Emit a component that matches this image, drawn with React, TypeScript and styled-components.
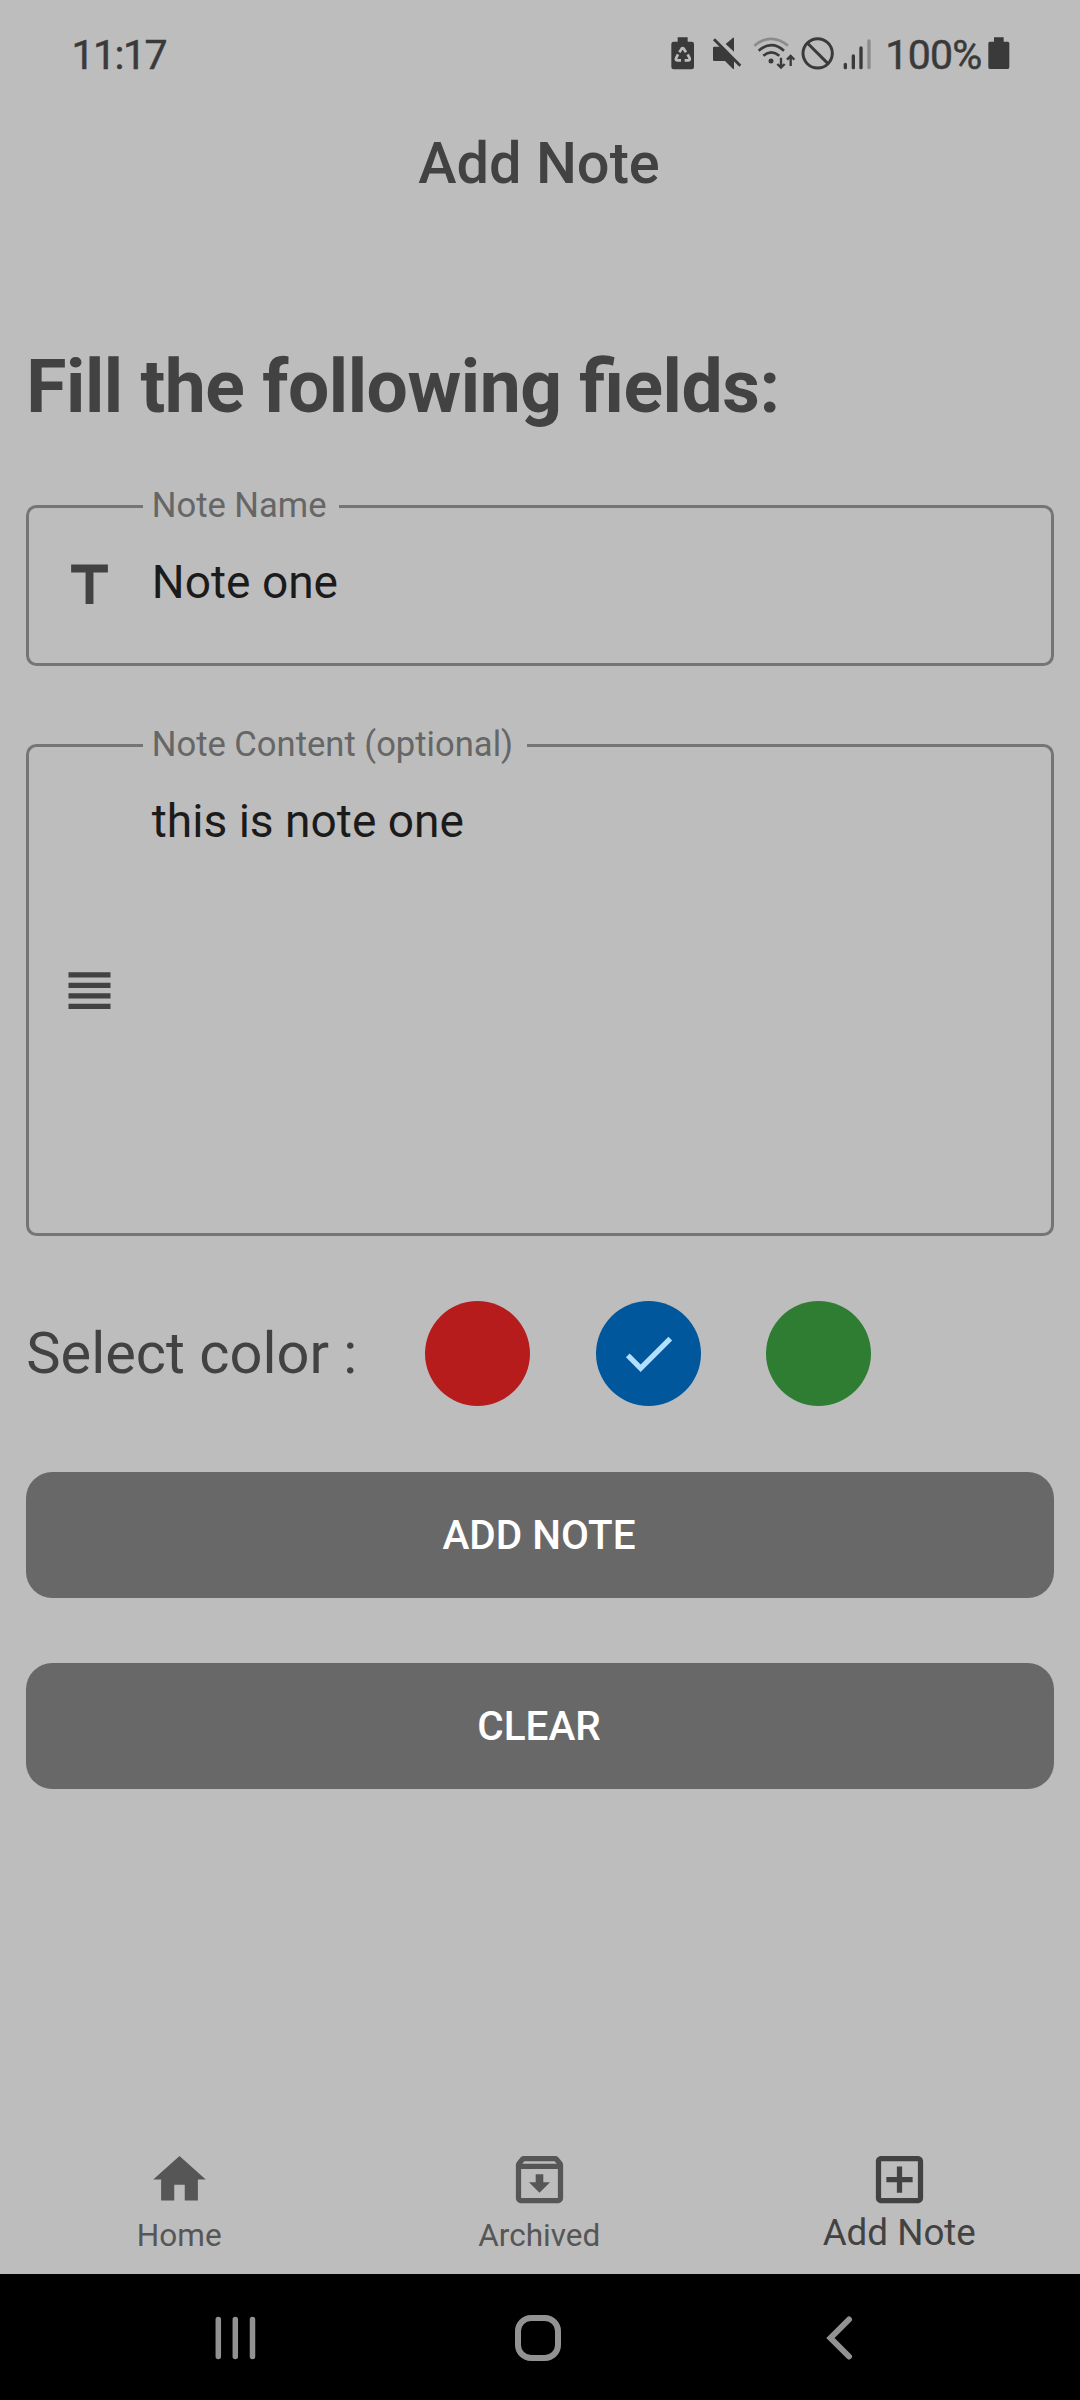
import React from "react";
import styled, { createGlobalStyle } from "styled-components";

const BG = "#bdbdbd";
const INK = "#424242";
const STATUS = "#3a3a3a";

const GlobalStyle = createGlobalStyle`
  * { box-sizing: border-box; }
  body { margin: 0; background: ${BG}; }
  svg { display: block; flex: none; }
`;

const Screen = styled.div`
  width: 1080px;
  height: 2400px;
  display: flex;
  flex-direction: column;
  background: ${BG};
  color: ${INK};
  font-family: Roboto, "Noto Sans", sans-serif;
  overflow: hidden;
`;

const StatusBar = styled.header`
  display: flex;
  justify-content: space-between;
  height: 84px;
  padding: 31px 70.3px 0 71.5px;
  color: ${STATUS};
`;

const StatusText = styled.span<{ $spacing: number; $width?: number }>`
  width: ${(p) => (p.$width ? `${p.$width}px` : "auto")};
  font-size: 41px;
  line-height: 48px;
  font-weight: 400;
  -webkit-text-stroke: 0.5px ${STATUS};
  letter-spacing: ${(p) => p.$spacing}px;
  white-space: nowrap;
`;

const StatusIcons = styled.div`
  display: flex;
  align-items: flex-start;
`;

const Glyph = styled.svg<{ $gap?: number }>`
  margin-top: 4px;
  margin-right: ${(p) => p.$gap ?? 0}px;
`;

const TitleBar = styled.div`
  display: flex;
  align-items: center;
  justify-content: center;
  height: 158px;
  padding-right: 2px;
  font-size: 57.75px;
  font-weight: 500;
  line-height: 68px;
`;

const Form = styled.main`
  flex: 1;
  display: flex;
  flex-direction: column;
  padding: 102px 26.25px 0;
`;

const Heading = styled.h1`
  margin: 0;
  font-size: 73.2px;
  line-height: 86px;
  font-weight: 700;
  letter-spacing: -0.45px;
  font-feature-settings: "liga" 1;
`;

const Field = styled.div<{ $height: number; $top: number }>`
  position: relative;
  display: flex;
  height: ${(p) => p.$height}px;
  margin-top: ${(p) => p.$top}px;
  padding-left: 28.5px;
  border: 3px solid #757575;
  border-radius: 10.5px;
`;

const FieldIcon = styled.div`
  align-self: center;
`;

const FieldLabel = styled.label<{ $width: number }>`
  position: absolute;
  left: 114px;
  top: -23px;
  width: ${(p) => p.$width}px;
  padding-left: 8.5px;
  background: ${BG};
  color: #666;
  font-size: 34.6px;
  line-height: 40px;
  white-space: nowrap;
`;

const FieldValue = styled.span`
  margin: 47px 0 0 31px;
  color: #1b1b1b;
  font-size: 46.1px;
  line-height: 54px;
`;

const ColorRow = styled.div`
  display: flex;
  align-items: center;
  height: 105px;
  margin-top: 65px;
`;

const ColorLabel = styled.span`
  width: 399px;
  padding-bottom: 2px;
  font-size: 57.75px;
  line-height: 68px;
`;

const Swatch = styled.button<{ $color: string }>`
  display: flex;
  align-items: center;
  justify-content: center;
  width: 105px;
  height: 105px;
  margin: 0 65.6px 0 0;
  padding: 0;
  border: 0;
  border-radius: 50%;
  background: ${(p) => p.$color};
`;

const ActionButton = styled.button`
  height: 126.2px;
  margin-top: 65.5px;
  padding: 0 2px 0 0;
  border: 0;
  border-radius: 26.25px;
  background: #686868;
  color: #fff;
  font-family: inherit;
  font-size: 40.5px;
  font-weight: 500;
  line-height: 48px;
`;

const TabBar = styled.nav`
  display: grid;
  grid-template-columns: repeat(3, 1fr);
  height: 146px;
  padding-top: 20px;
`;

const Tab = styled.div<{ $active?: boolean }>`
  display: flex;
  flex-direction: column;
  align-items: center;
  padding-right: 1.5px;
  color: ${(p) => (p.$active ? INK : "#565656")};
  font-size: ${(p) => (p.$active ? 36.75 : 31.5)}px;
  line-height: ${(p) => (p.$active ? 43 : 49)}px;
`;

const NavBar = styled.footer`
  display: flex;
  align-items: center;
  justify-content: space-between;
  height: 126px;
  padding: 2px 227px 0 214px;
  background: #000;
`;

const HomeKey = styled.svg`
  margin-right: 7px;
`;

const Icon = ({ d, color = "currentColor" }: { d: string; color?: string }) => (
  <svg width="63" height="63" viewBox="0 0 24 24" fill={color}>
    <path d={d} />
  </svg>
);

const PATHS = {
  text: "M5 4v3h5.5v12h3V7H19V4z",
  lines: "M4 15h16v-2H4v2zm0 4h16v-2H4v2zm0-8h16V9H4v2zm0-6v2h16V5H4z",
  check: "M9 16.17L4.83 12l-1.42 1.41L9 19 21 7l-1.41-1.41z",
  home: "M10 20v-6h4v6h5v-8h3L12 3 2 12h3v8z",
  archive:
    "M16 13h-2.55v-3h-2.9v3H8l4 4zM20.54 5.23l-1.39-1.68C18.88 3.21 18.47 3 18 3H6c-.47 0-.88.21-1.16.55L3.46 5.23C3.17 5.57 3 6.02 3 6.5V19c0 1.1.9 2 2 2h14c1.1 0 2-.9 2-2V6.5c0-.48-.17-.93-.46-1.27zM6.24 5h11.52l.83 1H5.42l.82-1zM5 19V8h14v11H5z",
  addBox:
    "M19 3H5c-1.1 0-2 .9-2 2v14c0 1.1.9 2 2 2h14c1.1 0 2-.9 2-2V5c0-1.1-.9-2-2-2zm0 16H5V5h14v14zm-8-2h2v-4h4v-2h-4V7h-2v4H7v2h4z",
};

const RecycleBattery = () => (
  <Glyph $gap={17.3} width="24" height="36" viewBox="92 45 72 108">
    <path
      fill={STATUS}
      d="M112 52h30v13h12q7 0 7 7v69q0 7-7 7h-54q-7 0-7-7V72q0-7 7-7h12z"
    />
    <g fill="none" stroke={BG} strokeWidth="8" strokeLinejoin="round">
      <path d="M117 97l7-11q3-4 6 0l7 11" />
      <path d="M142 103l6 12q2 6-5 6h-10" />
      <path d="M122 121h-10q-7 0-5-6l6-12" />
    </g>
  </Glyph>
);

const Muted = () => (
  <Glyph $gap={11.3} width="30" height="36" viewBox="216 45 90 108">
    <path
      fill={STATUS}
      d="M223 80h17l42 41v26h-3l-24-24h-32q-4 0-4-4V84q0-4 4-4zM257 72l22-19h3v42z"
    />
    <path d="M228 52l80 79" stroke={BG} strokeWidth="5" />
    <path d="M222 58l79 79" stroke={STATUS} strokeWidth="8.5" />
  </Glyph>
);

const Wifi = () => (
  <Glyph $gap={6} width="42" height="36" viewBox="340 45 126 108" fill="none" strokeWidth="8">
    <path d="M344 77q50-41 101 0" stroke="#8b8b8b" />
    <g stroke={STATUS}>
      <path d="M357 92q38-33 76 0" />
      <path d="M371 107q24-20 48 0" />
      <path d="M424 113v31M413 132l11 11 11-11M453 138v-30M442 119l11-11 11 11" strokeWidth="7" />
    </g>
    <circle cx="394" cy="123" r="7.5" fill={STATUS} />
  </Glyph>
);

const Blocked = () => (
  <Glyph $gap={8} width="34" height="36" viewBox="484 45 102 108" fill="none" stroke={STATUS} strokeWidth="9">
    <circle cx="534" cy="100" r="44" />
    <path d="M503 69l62 62" />
  </Glyph>
);

const Signal = () => (
  <Glyph $gap={14} width="28" height="36" viewBox="610 45 84 108" strokeWidth="10" strokeLinecap="round" stroke={STATUS}>
    <path d="M617 133v10M641 108v35M664 84v59" />
    <path d="M688 63v80" stroke="#8b8b8b" />
  </Glyph>
);

const Battery = () => (
  <Glyph width="22" height="36" viewBox="1043 45 66 108">
    <path
      fill={STATUS}
      d="M1061 52h29v13h12q5 0 5 5v72q0 5-5 5h-53q-5 0-5-5V70q0-5 5-5h12z"
    />
  </Glyph>
);

export default function App() {
  return (
    <Screen>
      <GlobalStyle />
      <StatusBar>
        <StatusText $spacing={-1.5}>11:17</StatusText>
        <StatusIcons>
          <RecycleBattery />
          <Muted />
          <Wifi />
          <Blocked />
          <Signal />
          <StatusText $spacing={-0.7} $width={102.4}>
            100%
          </StatusText>
          <Battery />
        </StatusIcons>
      </StatusBar>
      <TitleBar>Add Note</TitleBar>
      <Form>
        <Heading>Fill the following fields:</Heading>
        <Field $height={161} $top={75}>
          <FieldLabel $width={196}>Note Name</FieldLabel>
          <FieldIcon>
            <Icon d={PATHS.text} />
          </FieldIcon>
          <FieldValue>Note one</FieldValue>
        </Field>
        <Field $height={492} $top={78}>
          <FieldLabel $width={384}>Note Content (optional)</FieldLabel>
          <FieldIcon>
            <Icon d={PATHS.lines} />
          </FieldIcon>
          <FieldValue>this is note one</FieldValue>
        </Field>
        <ColorRow>
          <ColorLabel>Select color :</ColorLabel>
          <Swatch $color="#b71c1c" />
          <Swatch $color="#01579b">
            <Icon d={PATHS.check} color="#b3e0ff" />
          </Swatch>
          <Swatch $color="#2e7d32" />
        </ColorRow>
        <ActionButton>ADD NOTE</ActionButton>
        <ActionButton>CLEAR</ActionButton>
      </Form>
      <TabBar>
        <Tab>
          <Icon d={PATHS.home} />
          Home
        </Tab>
        <Tab>
          <Icon d={PATHS.archive} />
          Archived
        </Tab>
        <Tab $active>
          <Icon d={PATHS.addBox} />
          Add Note
        </Tab>
      </TabBar>
      <NavBar>
        <svg width="42" height="48" viewBox="0 0 42 48" stroke="#929292" strokeWidth="5.5" strokeLinecap="round">
          <path d="M4.3 5.5v37M21.3 5.5v37M38.5 5.5v37" />
        </svg>
        <HomeKey width="48" height="48" viewBox="0 0 48 48" fill="none" stroke="#929292" strokeWidth="6">
          <rect x="4" y="4" width="40" height="40" rx="13" />
        </HomeKey>
        <svg width="27" height="48" viewBox="0 0 27 48" fill="none" stroke="#929292" strokeWidth="6" strokeLinecap="round">
          <path d="M23 5.5L4.5 24 23 42.5" />
        </svg>
      </NavBar>
    </Screen>
  );
}
